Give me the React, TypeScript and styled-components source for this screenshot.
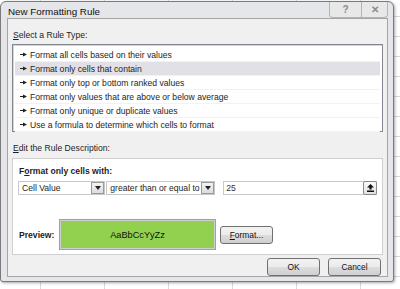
import React from "react";
import styled, { createGlobalStyle } from "styled-components";

const GlobalStyle = createGlobalStyle`
  html, body {
    margin: 0;
    padding: 0;
  }
  body {
    width: 400px;
    height: 289px;
    overflow: hidden;
    font-family: "Liberation Sans", Arial, sans-serif;
    font-size: 8.6px;
    color: #1e1e1e;
    background-color: #ffffff;
    background-image:
      linear-gradient(to right, #d9d9d9 1px, transparent 1px),
      linear-gradient(to bottom, #d9d9d9 1px, transparent 1px);
    background-size: 64px 20px;
    background-position: -24px -4px;
  }
`;

const Page = styled.div`
  padding: 1px 0 0 0;
`;

const Window = styled.div`
  width: 394px;
  height: 281px;
  background: #e4e6e9;
  border: 1px solid #7a7a7a;
  border-radius: 6px 6px 3px 3px;
  box-shadow: 1px 1px 3px rgba(0, 0, 0, 0.35);
  display: flex;
  flex-direction: column;
  padding: 0 5px 5px 6px;
  box-sizing: border-box;
`;

const TitleBar = styled.div`
  height: 20px;
  display: flex;
  align-items: center;
  justify-content: space-between;
`;

const Title = styled.span`
  font-size: 9.8px;
  color: #111;
  margin-left: 1px;
  margin-top: 2px;
`;

const Caption = styled.div`
  display: flex;
  align-self: flex-start;
`;

const CaptionButton = styled.div<{ $w: number }>`
  width: ${(p) => p.$w}px;
  height: 15px;
  border: 1px solid #b4b4b4;
  border-top: none;
  background: #e8e8e8;
  display: flex;
  align-items: center;
  justify-content: center;
  color: #8a8a8a;
  font-weight: bold;
  font-size: 10px;
  &:first-child {
    border-radius: 0 0 0 4px;
    border-right: none;
  }
  &:last-child {
    border-radius: 0 0 4px 0;
  }
`;

const Client = styled.div`
  flex: 1;
  background: #f0f0f0;
  border: 1px solid #a5a5a5;
  padding: 0 4px 0 4px;
  display: flex;
  flex-direction: column;
`;

const SectionLabel = styled.div`
  height: 12px;
  line-height: 12px;
  margin: 10px 0 0 1px;
  u {
    text-decoration: underline;
  }
`;

const ListBox = styled.div`
  margin-top: 3px;
  height: 88px;
  background: #fff;
  border: 1px solid #828790;
  box-shadow: inset 1px 1px 0 #d5d5d5;
  padding: 3px 2px 0 2px;
  box-sizing: border-box;
  display: flex;
  flex-direction: column;
`;

const RuleRow = styled.div<{ $selected?: boolean }>`
  height: 14px;
  flex: none;
  box-sizing: border-box;
  display: flex;
  align-items: center;
  gap: 3px;
  padding-left: 5px;
  background: ${(p) => (p.$selected ? "#e0e0e6" : "transparent")};
  border-bottom: 1px solid #f2f2f2;
`;

const Arrow = () => (
  <svg width="7" height="5" viewBox="0 0 7 5">
    <path d="M0 2.5h4" stroke="#222" strokeWidth="1" />
    <path d="M3 0.5L7 2.5L3 4.5Z" fill="#222" />
  </svg>
);

const DescBox = styled.div`
  margin-top: 4px;
  height: 97px;
  background: #fff;
  border: 1px solid #d0d0d0;
  padding: 6px 5px 0 5px;
  box-sizing: border-box;
  display: flex;
  flex-direction: column;
`;

const Bold = styled.div`
  font-weight: bold;
  height: 12px;
  line-height: 12px;
  margin-left: 1px;
  u {
    text-decoration: underline;
  }
`;

const FieldRow = styled.div`
  display: flex;
  align-items: center;
  margin-top: 4px;
  height: 14px;
`;

const Select = styled.div<{ $w: number; $ml: number }>`
  width: ${(p) => p.$w}px;
  margin-left: ${(p) => p.$ml}px;
  height: 14px;
  display: flex;
  align-items: center;
  justify-content: space-between;
  border: 1px solid #c8c8c8;
  box-sizing: border-box;
  padding-left: 3px;
  background: #fff;
  white-space: nowrap;
`;

const DropButton = styled.div`
  width: 13px;
  height: 12px;
  box-sizing: border-box;
  background: linear-gradient(#f4f4f4, #dcdcdc);
  border: 1px solid #9a9a9a;
  display: flex;
  align-items: center;
  justify-content: center;
  flex: none;
`;

const Caret = () => (
  <svg width="6" height="4" viewBox="0 0 6 4">
    <path d="M0 0h6L3 4Z" fill="#222" />
  </svg>
);

const TextInput = styled.div`
  margin-left: 8px;
  width: 155px;
  height: 14px;
  border: 1px solid #c8c8c8;
  box-sizing: border-box;
  display: flex;
  align-items: center;
  justify-content: space-between;
  padding-left: 2px;
  color: #333;
`;

const CollapseButton = styled.div`
  width: 14px;
  height: 14px;
  border: 1px solid #8a8a8a;
  border-radius: 2px;
  box-sizing: border-box;
  background: linear-gradient(#fafafa, #e2e2e2);
  display: flex;
  align-items: center;
  justify-content: center;
  margin-right: -1px;
`;

const UpIcon = () => (
  <svg width="7" height="8" viewBox="0 0 7 8">
    <path d="M3.5 0L7 3.5H4.6v2H2.4v-2H0Z" fill="#111" />
    <rect x="0" y="6.5" width="7" height="1.5" fill="#111" />
  </svg>
);

const PreviewRow = styled.div`
  display: flex;
  align-items: center;
  margin-top: 24px;
`;

const PreviewLabel = styled(Bold)`
  width: 40px;
`;

const Swatch = styled.div`
  width: 157px;
  height: 31px;
  background: #92d050;
  border: 1px solid #a0a0a0;
  box-shadow: inset 0 0 0 1px #d0d0d0;
  box-sizing: border-box;
  display: flex;
  align-items: center;
  justify-content: center;
  font-size: 9.2px;
  color: #111;
`;

const Button = styled.div<{ $w?: number }>`
  width: ${(p) => p.$w ?? 53}px;
  height: 18px;
  border: 1px solid #707070;
  border-radius: 3px;
  background: linear-gradient(#f2f2f2 0%, #ebebeb 50%, #dddddd 51%, #cfcfcf 100%);
  box-sizing: border-box;
  display: flex;
  align-items: center;
  justify-content: center;
  font-size: 8.4px;
  color: #111;
  u {
    text-decoration: underline;
  }
`;

const FormatButton = styled(Button)`
  margin-left: 4px;
`;

const Footer = styled.div`
  display: flex;
  justify-content: flex-end;
  gap: 8px;
  margin-top: 3px;
  padding-right: 2px;
`;

const rules = [
  "Format all cells based on their values",
  "Format only cells that contain",
  "Format only top or bottom ranked values",
  "Format only values that are above or below average",
  "Format only unique or duplicate values",
  "Use a formula to determine which cells to format",
];

export default function App() {
  return (
    <>
      <GlobalStyle />
      <Page>
        <Window>
          <TitleBar>
            <Title>New Formatting Rule</Title>
            <Caption>
              <CaptionButton $w={31}>?</CaptionButton>
              <CaptionButton $w={25}>✕</CaptionButton>
            </Caption>
          </TitleBar>
          <Client>
            <SectionLabel>
              <u>S</u>elect a Rule Type:
            </SectionLabel>
            <ListBox>
              {rules.map((r, i) => (
                <RuleRow key={r} $selected={i === 1}>
                  <Arrow />
                  <span>{r}</span>
                </RuleRow>
              ))}
            </ListBox>
            <SectionLabel>
              <u>E</u>dit the Rule Description:
            </SectionLabel>
            <DescBox>
              <Bold>
                F<u>o</u>rmat only cells with:
              </Bold>
              <FieldRow>
                <Select $w={88} $ml={0}>
                  <span>Cell Value</span>
                  <DropButton>
                    <Caret />
                  </DropButton>
                </Select>
                <Select $w={110} $ml={1}>
                  <span>greater than or equal to</span>
                  <DropButton>
                    <Caret />
                  </DropButton>
                </Select>
                <TextInput>
                  <span>25</span>
                  <CollapseButton>
                    <UpIcon />
                  </CollapseButton>
                </TextInput>
              </FieldRow>
              <PreviewRow>
                <PreviewLabel>Preview:</PreviewLabel>
                <Swatch>AaBbCcYyZz</Swatch>
                <FormatButton>
                  <span>
                    <u>F</u>ormat...
                  </span>
                </FormatButton>
              </PreviewRow>
            </DescBox>
            <Footer>
              <Button>OK</Button>
              <Button>Cancel</Button>
            </Footer>
          </Client>
        </Window>
      </Page>
    </>
  );
}
